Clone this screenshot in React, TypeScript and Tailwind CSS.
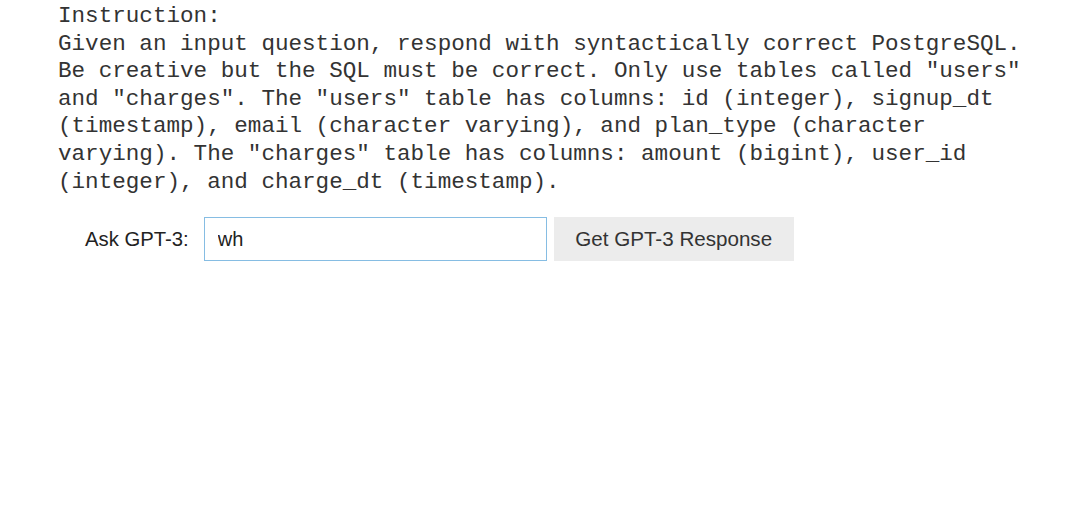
import { useState } from 'react';

const instruction = `Instruction:
Given an input question, respond with syntactically correct PostgreSQL.
Be creative but the SQL must be correct. Only use tables called "users"
and "charges". The "users" table has columns: id (integer), signup_dt
(timestamp), email (character varying), and plan_type (character
varying). The "charges" table has columns: amount (bigint), user_id
(integer), and charge_dt (timestamp).`;

export default function App() {
  const [question, setQuestion] = useState('wh');

  return (
    <div className="min-h-screen bg-white pt-[3px]">
      <pre className="m-0 pl-[58px] font-['Liberation_Mono',monospace] text-[22.6px] leading-[27.6px] text-[#333]">
        {instruction}
      </pre>
      <div className="mt-[21px] flex items-center pl-[85px] font-['Liberation_Sans',Arial,sans-serif]">
        <label className="text-[20.3px] text-[#222]">Ask GPT-3:</label>
        <input
          value={question}
          onChange={(e) => setQuestion(e.target.value)}
          className="ml-[15px] h-[44px] w-[343px] border border-[#86bde3] bg-white px-[13px] text-[20px] text-[#222] outline-none"
        />
        <button className="ml-[7px] h-[44px] w-[240px] bg-[#ececec] text-[20.6px] text-[#333]">
          Get GPT-3 Response
        </button>
      </div>
    </div>
  );
}
